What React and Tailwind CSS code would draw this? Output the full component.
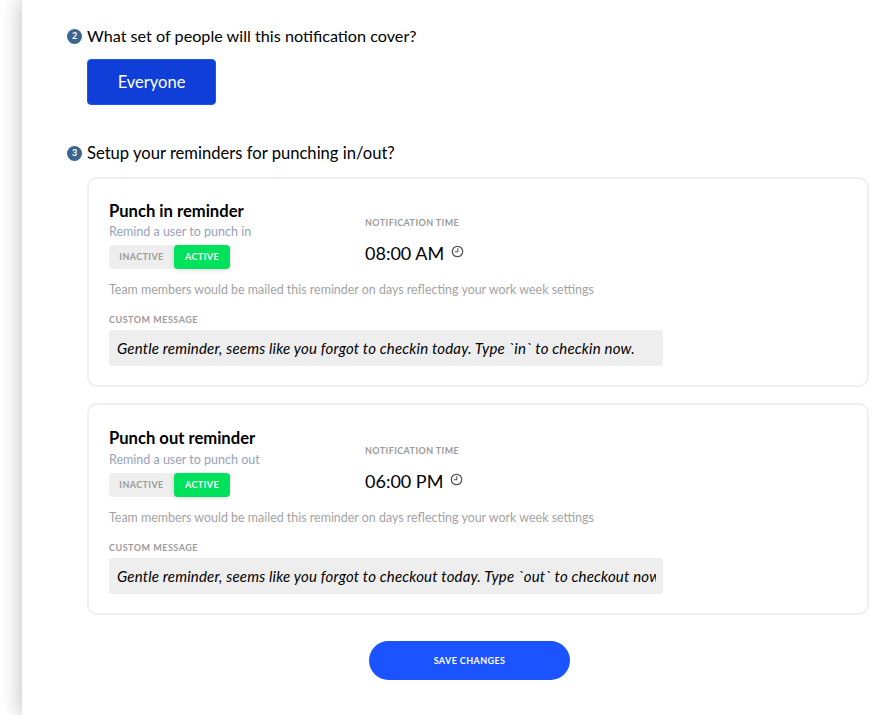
import React from "react";

const StepBadge = ({ n }) => (
  <span className="w-[15px] h-[15px] rounded-full bg-[#3c6490] text-white text-[9px] font-bold flex items-center justify-center shrink-0">
    {n}
  </span>
);

const ClockIcon = () => (
  <svg width="13" height="13" viewBox="0 0 13 13" fill="none" stroke="#555" className="mb-[3px]">
    <circle cx="6.5" cy="6.5" r="5.2" strokeWidth="1.3" />
    <path d="M6.8 3.2V6.8H3.8" strokeWidth="1.1" />
  </svg>
);

const ReminderCard = ({ title, subtitle, time, message, cardClass, subClass, timeClass }) => (
  <div className={`w-[782px] border-2 border-[#f0f0f0] rounded-[10px] pl-5 ${cardClass}`}>
    <div className="flex">
      <div className="w-[256px]">
        <h3 className="text-[16.6px] leading-5 font-bold text-black">{title}</h3>
        <p className={`text-[12.5px] leading-4 text-[#98a2b8] ${subClass}`}>{subtitle}</p>
        <div className="mt-[5px] w-[121px] h-6 bg-[#eeeeee] rounded-[4px] flex items-center">
          <span className="w-[65px] text-center text-[9px] font-bold tracking-[0.4px] text-[#9b9b9b]">INACTIVE</span>
          <span className="w-14 h-6 rounded-[4px] bg-[#00e25b] shadow-[0_1px_4px_rgba(0,0,0,0.15)] flex items-center justify-center text-[9px] font-bold tracking-[0.4px] text-white">ACTIVE</span>
        </div>
      </div>
      <div className={timeClass}>
        <div className="text-[9px] leading-3 font-bold tracking-[0.4px] text-[#9b9b9b]">NOTIFICATION TIME</div>
        <div className="mt-3 flex items-center gap-[7px]">
          <span className="text-[18px] leading-6 text-black">{time}</span>
          <ClockIcon />
        </div>
      </div>
    </div>
    <p className="mt-[13px] text-[12.45px] leading-4 text-[#a3a3a3]">
      Team members would be mailed this reminder on days reflecting your work week settings
    </p>
    <div className="mt-4 text-[9px] leading-3 font-bold tracking-[0.5px] text-[#9b9b9b]">CUSTOM MESSAGE</div>
    <div className="mt-1 w-[554px] h-9 bg-[#eeeeee] rounded-[4px] pl-2 pr-[7px] flex items-center overflow-hidden">
      <span className="text-[15px] tracking-[0.18px] italic text-black whitespace-nowrap overflow-hidden">{message}</span>
    </div>
  </div>
);

export default function App() {
  return (
    <div className="h-[715px] w-[895px] overflow-hidden bg-white font-['Lato',sans-serif]">
      <div className="ml-[22px] h-full bg-white shadow-[-3px_0_18px_rgba(0,0,0,0.22)] pl-[45px] pt-[26px]">
        <div className="flex items-center gap-[5px] h-5">
          <StepBadge n={2} />
          <h2 className="text-[16.2px] text-black">What set of people will this notification cover?</h2>
        </div>
        <button className="ml-5 mt-[13px] w-[129px] h-[46px] bg-[#0f3fd8] border border-[#1a56f0] rounded-[4px] text-white text-[16.5px]">
          Everyone
        </button>
        <div className="flex items-center gap-[5px] h-5 mt-[38px]">
          <StepBadge n={3} />
          <h2 className="text-[16.6px] text-black">Setup your reminders for punching in/out?</h2>
        </div>
        <div className="ml-5 mt-[14px] flex flex-col gap-4">
          <ReminderCard
            title="Punch in reminder"
            subtitle="Remind a user to punch in"
            time="08:00 AM"
            message="Gentle reminder, seems like you forgot to checkin today. Type `in` to checkin now."
            cardClass="h-[210px] pt-[22px]"
            subClass="mt-[3px]"
            timeClass="pt-4"
          />
          <ReminderCard
            title="Punch out reminder"
            subtitle="Remind a user to punch out"
            time="06:00 PM"
            message="Gentle reminder, seems like you forgot to checkout today. Type `out` to checkout now."
            cardClass="h-[212px] pt-[23px]"
            subClass="mt-1"
            timeClass="pt-[17px]"
          />
        </div>
        <div className="w-[782px] ml-5 mt-[26px] flex">
          <button className="ml-[282px] w-[201px] h-[39px] rounded-full bg-[#1a53ff] text-white text-[9px] font-bold tracking-[0.4px]">
            SAVE CHANGES
          </button>
        </div>
      </div>
    </div>
  );
}
